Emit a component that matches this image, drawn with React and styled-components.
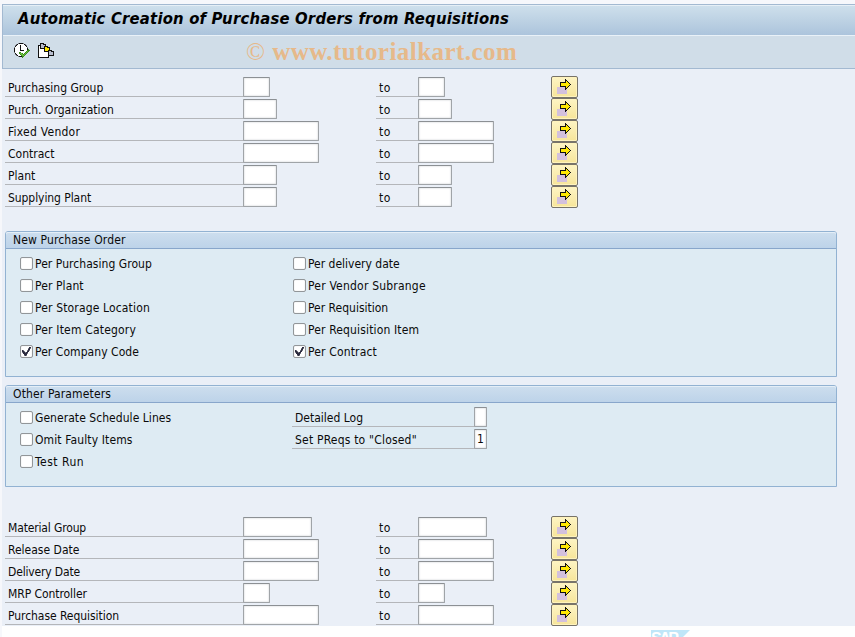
import React from 'react';
import styled, { createGlobalStyle } from 'styled-components';

const GlobalStyle = createGlobalStyle`
  * {
    box-sizing: border-box;
  }
  body {
    margin: 0;
    background-color: #fefefe;
    overflow: hidden;
    font-family: 'DejaVu Sans Condensed', 'DejaVu Sans', sans-serif;
    font-size: 12px;
    font-stretch: condensed;
    color: #0a0a0a;
  }
`;

const StyledPage = styled.div`
  height: 637px;
  padding: 4px 0 0 2px;
  background-color: #f6f7fb;
`;

const StyledTitleBar = styled.div`
  height: 31px;
  padding-left: 15px;
  border: 1px solid #a3b9d1;
  border-width: 1px 0 0 1px;
  background: linear-gradient(#cfe0ec, #acc4dc);
  box-shadow: inset 0 1px 0 #e6eff6;
`;

const StyledTitle = styled.h1`
  margin: 0;
  font-family: 'DejaVu Sans', sans-serif;
  font-size: 16.5px;
  font-stretch: condensed;
  font-weight: bold;
  font-style: italic;
  line-height: 27px;
  letter-spacing: 0.2px;
  white-space: nowrap;
  color: #000000;
`;

const StyledToolbar = styled.div`
  display: flex;
  height: 34px;
  padding: 8px 0 0 11px;
  gap: 8px;
  border: 1px solid #a3b9d1;
  border-width: 0 0 1px 1px;
  background-color: #d0dde8;
  box-shadow: inset 0 1px 0 #e9f1f8;

  svg {
    flex: none;
  }
`;

const StyledWatermark = styled.div`
  margin: -1px 0 0 184px;
  font-family: 'Liberation Serif', serif;
  font-size: 25px;
  font-weight: bold;
  line-height: 20px;
  letter-spacing: 0.45px;
  white-space: nowrap;
  color: #e6b98a;

  span {
    font-weight: normal;
  }
`;

const StyledScreen = styled.div`
  display: flex;
  flex-direction: column;
  height: 557px;
  padding: 7px 0 0 3px;
  background-color: #eaeff7;
`;

const StyledRow = styled.div`
  display: flex;
  height: 22px;
  margin-top: ${(props) => props.$shift || 0}px;
`;

const StyledLabel = styled.div`
  width: ${(props) => props.$width}px;
  height: 21px;
  padding-left: 3px;
  border-bottom: 1px solid #b4b6ba;
  line-height: 25px;
  letter-spacing: ${(props) => props.$spacing || 0}px;
  white-space: nowrap;
`;

const StyledInput = styled.div`
  width: ${(props) => props.$width}px;
  height: 20px;
  margin: 1px ${(props) => props.$gap || 0}px 0 0;
  border: 1px solid #a0a4a8;
  border-top-color: #8c9094;
  border-radius: 1px;
  background-color: #ffffff;
  box-shadow: inset 0 0 2px #c3c7cb;
  line-height: 19px;
  text-align: center;
`;

const StyledArrowButton = styled.div`
  width: 27px;
  height: 22px;
  padding: 2px 0 0 5px;
  border: 1px solid #77736a;
  border-radius: 2px;
  background: linear-gradient(#fdf4c4, #f7e59a);
  box-shadow: inset 0 0 0 1px #fff3bd;

  svg {
    display: block;
  }
`;

const StyledGroup = styled.div`
  width: 832px;
  height: ${(props) => props.$height}px;
  margin: ${(props) => props.$margin};
  border: 1px solid #92b2d2;
  border-radius: 3px 3px 0 0;
  background-color: #deebf3;
`;

const StyledGroupTitle = styled.div`
  height: 17px;
  padding-left: 7px;
  border-bottom: 1px solid #88a6cb;
  border-radius: 2px 2px 0 0;
  background: linear-gradient(#cddeee, #bdd3e9);
  box-shadow: inset 0 1px 0 #e4eef7;
  line-height: 16px;
  letter-spacing: 0.14px;
`;

const StyledGroupBody = styled.div`
  display: grid;
  grid-template-columns: 272px 300px;
  grid-auto-rows: 22px;
  padding: 4px 0 0 14px;
`;

const StyledCheck = styled.div`
  display: flex;
  height: 22px;
  gap: 2px;
  padding-left: ${(props) => props.$indent || 0}px;
  line-height: 22px;
  letter-spacing: ${(props) => props.$spacing || 0}px;
  white-space: nowrap;

  svg {
    display: block;
  }
`;

const StyledBox = styled.div`
  width: 13px;
  height: 13px;
  margin-top: 4px;
  border: 1px solid #929699;
  border-radius: 2px;
  background-color: #ffffff;
  box-shadow: inset 0 0 1px #b9bdc0;
`;

const StyledFooter = styled.div`
  height: 11px;
  padding: 4px 0 0 649px;
  background-color: #fefefe;

  svg {
    display: block;
  }
`;

const StyledLogoText = styled.text`
  font-family: 'Liberation Sans', sans-serif;
  font-size: 16px;
  font-weight: bold;
  fill: #ffffff;
`;

const selectionTop = [
  { label: 'Purchasing Group', width: 27 },
  { label: 'Purch. Organization', width: 34 },
  { label: 'Fixed Vendor', width: 76, spacing: 0.25 },
  { label: 'Contract', width: 76 },
  { label: 'Plant', width: 34 },
  { label: 'Supplying Plant', width: 34, spacing: -0.07 },
];

const selectionBottom = [
  { label: 'Material Group', width: 69, spacing: -0.15 },
  { label: 'Release Date', width: 76 },
  { label: 'Delivery Date', width: 76, spacing: -0.16 },
  { label: 'MRP Controller', width: 27, spacing: -0.07 },
  { label: 'Purchase Requisition', width: 76, spacing: -0.05 },
];

const orderOptions = [
  { label: 'Per Purchasing Group', spacing: 0.05 },
  { label: 'Per delivery date', indent: 1 },
  { label: 'Per Plant', spacing: 0.1 },
  { label: 'Per Vendor Subrange', indent: 1, spacing: 0.21 },
  { label: 'Per Storage Location', spacing: 0.15 },
  { label: 'Per Requisition', indent: 1 },
  { label: 'Per Item Category', spacing: 0.18 },
  { label: 'Per Requisition Item', indent: 1, spacing: 0.15 },
  { label: 'Per Company Code', spacing: 0.06, checked: true },
  { label: 'Per Contract', indent: 1, spacing: 0.16, checked: true },
];

const colors = {
  k: '#111111',
  w: '#ffffff',
  y: '#ffe800',
  p: '#d3c0dd',
  g: '#3c8c1c',
  l: '#68bc3c',
  s: '#b7bdce',
  n: '#777b84',
  d: '#2c2c40',
};

const arrowMap = [
  '........k......',
  '........kk.....',
  '........kyk....',
  '...kkkkkkyyk...',
  '...kyyyyyyyyk..',
  '...kyyyyyyyyyk.',
  '...kyyyyyyyyk..',
  '...kkkkkkyyk...',
  'ppppppppkyk....',
  'ppppppppkk.....',
  'ppppppppkp.....',
  'pppppppppp.....',
  'pppppppppp.....',
  'pppppppppp.....',
  'pppppppppp.....',
];

const executeMap = [
  '....nkkkkn......',
  '..nkwwwwwwkn....',
  '.nkwwwkwwwwkn...',
  '.kwwwwkwwwwwk...',
  'nwwwwwkwwwwwwn..',
  'kwwwwwkwwwwwwk..',
  'kwwwwwkwwwwwwkg.',
  'kwwwwwkkkkwwwggg',
  'kwwwwwwwwwwwglg.',
  'nwwwwggwwwwglg..',
  '.kwwwgllgwglg...',
  '.nkwwwgllglg....',
  '..nkwwwgllg.....',
  '....nkkkgg......',
  '........g.......',
];

const variantMap = [
  '..kkkk..........',
  '..ksskkk........',
  'kkkssssk........',
  'kwkssskkkk......',
  'kwkssskyykkk....',
  'kwkkkkkyyyyk....',
  'kwwwwwkyyyyk....',
  'kwwwwwkyyykkkk..',
  'kwwwwwkkkkksskkk',
  'kwwwwwwwwwkssssk',
  'kwwwwwwwwwkssssk',
  'kwwwwwwwwwkssssk',
  'kwwwwwwwwwkkkkkk',
  'kwwwwwwwwwk.....',
  'kkkkkkkkkkk.....',
];

const checkMap = [
  '.........',
  '.......dd',
  '......ndn',
  '......dd.',
  'dn...ndn.',
  'ddn..dd..',
  'nddndd...',
  '.ddddn...',
  '..ddd....',
  '..ndn....',
];

// one letter is one pixel, a dot is transparent
const PixelIcon = ({ map }) => (
  <svg width={map[0].length} height={map.length} shapeRendering='crispEdges'>
    {map.map((line, y) =>
      [...line].map(
        (c, x) =>
          c !== '.' && (
            <rect key={`${x}-${y}`} x={x} y={y} width='1' height='1' fill={colors[c]} />
          )
      )
    )}
  </svg>
);

const StyledMark = styled.div`
  padding-left: 1px;
`;

const Checkbox = ({ label, checked, indent, spacing }) => (
  <StyledCheck $indent={indent} $spacing={spacing}>
    <StyledBox>
      {checked && (
        <StyledMark>
          <PixelIcon map={checkMap} />
        </StyledMark>
      )}
    </StyledBox>
    {label}
  </StyledCheck>
);

const SelectionRow = ({ label, width, spacing }) => (
  <StyledRow>
    <StyledLabel $width={238} $spacing={spacing}>
      {label}
    </StyledLabel>
    <StyledInput $width={width} $gap={133 - width} />
    <StyledLabel $width={42} $spacing={0.5}>
      to
    </StyledLabel>
    <StyledInput $width={width} $gap={133 - width} />
    <StyledArrowButton>
      <PixelIcon map={arrowMap} />
    </StyledArrowButton>
  </StyledRow>
);

const App = () => (
  <>
    <GlobalStyle />
    <StyledPage>
      <StyledTitleBar>
        <StyledTitle>Automatic Creation of Purchase Orders from Requisitions</StyledTitle>
      </StyledTitleBar>
      <StyledToolbar>
        <PixelIcon map={executeMap} />
        <PixelIcon map={variantMap} />
        <StyledWatermark>
          <span>©</span> www.tutorialkart.com
        </StyledWatermark>
      </StyledToolbar>
      <StyledScreen>
        {selectionTop.map((row) => (
          <SelectionRow key={row.label} {...row} />
        ))}
        <StyledGroup $height={146} $margin='23px 0 8px'>
          <StyledGroupTitle>New Purchase Order</StyledGroupTitle>
          <StyledGroupBody>
            {orderOptions.map((option) => (
              <Checkbox key={option.label} {...option} />
            ))}
          </StyledGroupBody>
        </StyledGroup>
        <StyledGroup $height={102} $margin='0 0 29px'>
          <StyledGroupTitle>Other Parameters</StyledGroupTitle>
          <StyledGroupBody>
            <Checkbox label='Generate Schedule Lines' spacing={0.05} />
            <StyledRow $shift={-1}>
              <StyledLabel $width={182}>Detailed Log</StyledLabel>
              <StyledInput $width={13} />
            </StyledRow>
            <Checkbox label='Omit Faulty Items' spacing={0.12} />
            <StyledRow $shift={-1}>
              <StyledLabel $width={182} $spacing={0.2}>
                Set PReqs to "Closed"
              </StyledLabel>
              <StyledInput $width={13}>1</StyledInput>
            </StyledRow>
            <Checkbox label='Test Run' spacing={0.5} />
          </StyledGroupBody>
        </StyledGroup>
        {selectionBottom.map((row) => (
          <SelectionRow key={row.label} {...row} />
        ))}
      </StyledScreen>
      <StyledFooter>
        <svg width='39' height='7' viewBox='0 0 39 7'>
          <path d='M0 0h39l-7 7H0z' fill='#bfe6f8' />
          <StyledLogoText x='0' y='14' textLength='28'>
            SAP
          </StyledLogoText>
        </svg>
      </StyledFooter>
    </StyledPage>
  </>
);

export default App;
